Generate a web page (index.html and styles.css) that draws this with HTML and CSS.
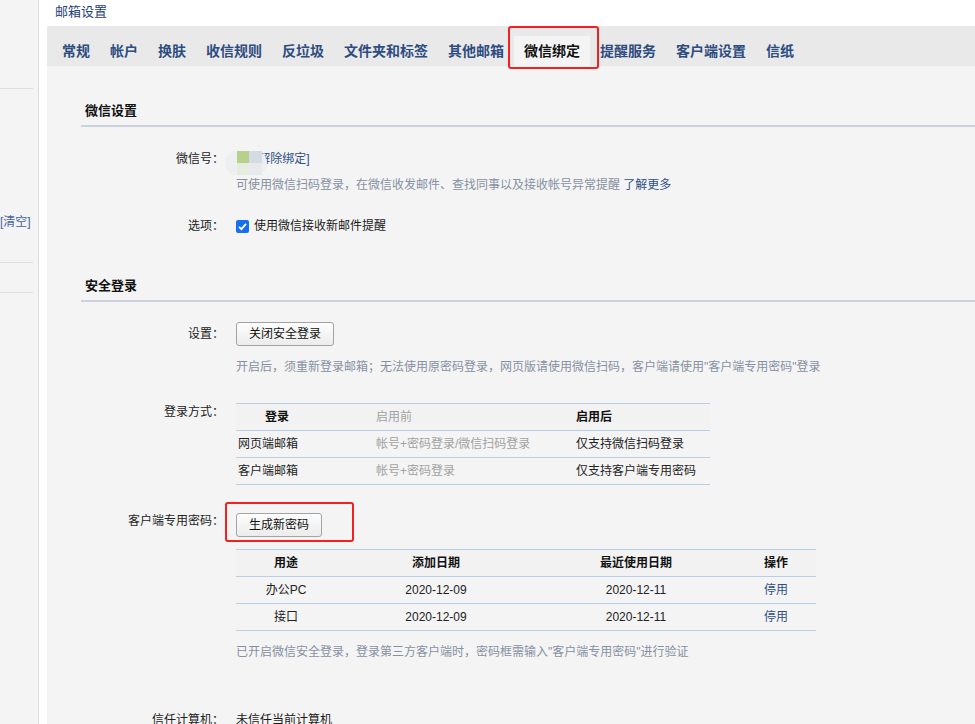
FILE: index.html
```html
<!DOCTYPE html>
<html lang="zh-CN">
<head>
<meta charset="utf-8">
<title>邮箱设置</title>
<link rel="stylesheet" href="styles.css">
</head>
<body>
<div class="page">
  <aside class="side">
    <div class="side-line first"></div>
    <a class="clear">[清空]</a>
    <div class="side-line second"></div>
    <div class="side-line third"></div>
  </aside>
  <div class="strip"></div>
  <main class="main">
    <div class="top">邮箱设置</div>
    <nav class="tabs">
      <span class="tab">常规</span>
      <span class="tab">帐户</span>
      <span class="tab">换肤</span>
      <span class="tab">收信规则</span>
      <span class="tab">反垃圾</span>
      <span class="tab">文件夹和标签</span>
      <span class="tab">其他邮箱</span>
      <span class="tab active">微信绑定<span class="mark tab-mark"></span></span>
      <span class="tab">提醒服务</span>
      <span class="tab">客户端设置</span>
      <span class="tab">信纸</span>
    </nav>

    <div class="content">
      <div class="sec-h">微信设置</div>

      <div class="row r-wx">
        <div class="label">微信号：</div>
        <div class="val">
          <div class="wx-line">
            <a class="link unbind">[解除绑定]</a>
            <span class="blur"><span class="b1"></span><span class="b2"></span><span class="b3"></span><span class="b4"></span></span>
          </div>
          <div class="hint h-wx">可使用微信扫码登录，在微信收发邮件、查找同事以及接收帐号异常提醒 <a class="link">了解更多</a></div>
        </div>
      </div>

      <div class="row r-opt">
        <div class="label">选项：</div>
        <div class="val check-line">
          <span class="check"><svg width="13" height="13" viewBox="0 0 13 13"><path d="M3 6.8 L5.4 9.2 L10 3.8" fill="none" stroke="#fff" stroke-width="1.8"/></svg></span>
          <span>使用微信接收新邮件提醒</span>
        </div>
      </div>

      <div class="sec-h sec2">安全登录</div>

      <div class="row r-set">
        <div class="label lb-btn">设置：</div>
        <div class="val">
          <button class="btn">关闭安全登录</button>
          <div class="hint h-set">开启后，须重新登录邮箱；无法使用原密码登录，网页版请使用微信扫码，客户端请使用"客户端专用密码"登录</div>
        </div>
      </div>

      <div class="row r-way">
        <div class="label lb-way">登录方式：</div>
        <div class="val">
          <table class="tbl t1">
            <tr class="th">
              <td class="c1 th1">登录</td>
              <td class="c2 muted">启用前</td>
              <td class="c3">启用后</td>
            </tr>
            <tr>
              <td class="c1">网页端邮箱</td>
              <td class="c2 muted">帐号+密码登录/微信扫码登录</td>
              <td class="c3">仅支持微信扫码登录</td>
            </tr>
            <tr>
              <td class="c1">客户端邮箱</td>
              <td class="c2 muted">帐号+密码登录</td>
              <td class="c3">仅支持客户端专用密码</td>
            </tr>
          </table>
        </div>
      </div>

      <div class="row r-pwd">
        <div class="label">客户端专用密码：</div>
        <div class="val">
          <div class="btn-wrap"><button class="btn">生成新密码</button><span class="mark btn-mark"></span></div>
          <table class="tbl t2">
            <tr class="th">
              <td class="d1">用途</td>
              <td class="d2">添加日期</td>
              <td class="d3">最近使用日期</td>
              <td class="d4">操作</td>
            </tr>
            <tr>
              <td>办公PC</td>
              <td>2020-12-09</td>
              <td>2020-12-11</td>
              <td><a class="link">停用</a></td>
            </tr>
            <tr>
              <td>接口</td>
              <td>2020-12-09</td>
              <td>2020-12-11</td>
              <td><a class="link">停用</a></td>
            </tr>
          </table>
          <div class="hint h-pwd">已开启微信安全登录，登录第三方客户端时，密码框需输入"客户端专用密码"进行验证</div>
        </div>
      </div>

      <div class="row r-trust">
        <div class="label">信任计算机：</div>
        <div class="val">未信任当前计算机</div>
      </div>
    </div>
  </main>
</div>
</body>
</html>
```

FILE: styles.css
```css
html, body {
  margin: 0;
  padding: 0;
}
body {
  font-family: "Liberation Sans", "Noto Sans CJK SC", sans-serif;
  font-size: 12px;
  line-height: 16px;
  color: #1a1a1a;
  background: #f4f4f4;
}
.page {
  display: flex;
  height: 724px;
  overflow: hidden;
}
.side {
  width: 38px;
  flex: none;
  background: #f4f4f4;
  border-right: 1px solid #dcdcdc;
}
.side-line {
  width: 33px;
  border-top: 1px solid #dedede;
}
.side-line.first { margin-top: 88px; }
.clear {
  display: block;
  margin-top: 125px;
  color: #4562a4;
  white-space: nowrap;
}
.side-line.second { margin-top: 32px; }
.side-line.third { margin-top: 29px; }
.strip {
  width: 8px;
  flex: none;
  background: #fff;
}
.main {
  flex: 1;
  background: #f4f4f4;
  min-width: 0;
}
.top {
  height: 26px;
  background: #fff;
  padding-left: 8px;
  font-size: 13px;
  line-height: 24px;
  color: #1f3f77;
}
.tabs {
  display: flex;
  align-items: flex-end;
  height: 40px;
  background: #e9e9e9;
  padding-left: 5px;
}
.tab {
  padding: 0 10px;
  height: 30px;
  line-height: 30px;
  font-size: 14px;
  font-weight: bold;
  color: #2d4c80;
  white-space: nowrap;
}
.tab.active {
  position: relative;
  background: #f4f4f4;
  color: #111;
}
.mark {
  position: absolute;
  box-sizing: border-box;
  border: 2px solid #f42020;
  border-radius: 3px;
}
.tab-mark {
  left: -6px;
  top: -10px;
  width: 91px;
  height: 43px;
}
.content {
  padding: 36px 0 0 34px;
}
.sec-h {
  font-size: 13px;
  font-weight: bold;
  line-height: 18px;
  padding: 0 4px 5px;
  color: #111;
  border-bottom: 2px solid #ccd1dd;
}
.sec2 { margin-top: 43px; }
.row {
  display: flex;
  align-items: flex-start;
}
.label {
  width: 143px;
  flex: none;
  text-align: right;
  color: #222;
}
.val {
  margin-left: 12px;
}
.link {
  color: #2f4f86;
  text-decoration: none;
}
.hint {
  color: #8790a3;
}
.r-wx { margin-top: 24px; }
.wx-line {
  position: relative;
  padding-left: 19px;
  height: 16px;
}
.blur {
  position: absolute;
  left: -11px;
  top: 0;
  width: 42px;
  height: 24px;
  border-radius: 12px;
  background: #eeeff0;
}
.blur span {
  position: absolute;
  width: 12px;
  height: 12px;
}
.blur .b1 { left: 12px; top: 0; background: #b5d18d; }
.blur .b2 { left: 24px; top: 0; background: #d6dae2; width: 13px; }
.blur .b3 { left: 12px; top: 12px; background: #e7ece1; }
.blur .b4 { left: 24px; top: 12px; background: #e8e9ed; width: 13px; }
.h-wx { margin-top: 10px; }
.r-opt { margin-top: 25px; }
.check-line {
  display: flex;
  align-items: center;
}
.check {
  width: 13px;
  height: 13px;
  border-radius: 2px;
  background: #1570ef;
  margin-right: 5px;
  display: inline-flex;
}
.r-set { margin-top: 20px; }
.lb-btn { padding-top: 4px; }
.btn {
  display: block;
  box-sizing: border-box;
  height: 24px;
  padding: 0 12px;
  border: 1px solid #a3a3a3;
  border-radius: 3px;
  background: linear-gradient(#fdfdfd, #ececec);
  font-family: inherit;
  font-size: 12px;
  line-height: 22px;
  color: #111;
}
.h-set { margin-top: 13px; }
.r-way { margin-top: 28px; }
.lb-way { padding-top: 1px; }
.tbl {
  border-collapse: collapse;
  border-top: 1px solid #b8cfe8;
}
.tbl td {
  height: 26px;
  padding: 0;
  border-bottom: 1px solid #b8cfe8;
  white-space: nowrap;
  color: #222;
}
.tbl .th td {
  background: #f2f2f2;
  font-weight: bold;
  color: #111;
}
.t1 .c1 { width: 140px; padding-left: 2px; box-sizing: border-box; }
.t1 .c2 { width: 200px; }
.t1 .c3 { width: 134px; }
.t1 .th td.th1 { padding-left: 29px; }
.tbl td.muted,
.tbl .th td.muted {
  color: #a2a2a2;
  font-weight: normal;
}
.r-pwd { margin-top: 28px; }
.btn-wrap {
  position: relative;
  width: max-content;
}
.btn-mark {
  left: -11px;
  top: -11px;
  width: 129px;
  height: 40px;
}
.t2 { margin-top: 12px; }
.t2 td { text-align: center; }
.t2 .d1 { width: 100px; }
.t2 .d2 { width: 200px; }
.t2 .d3 { width: 200px; }
.t2 .d4 { width: 80px; }
.h-pwd { margin-top: 13px; }
.r-trust { margin-top: 52px; }
```
